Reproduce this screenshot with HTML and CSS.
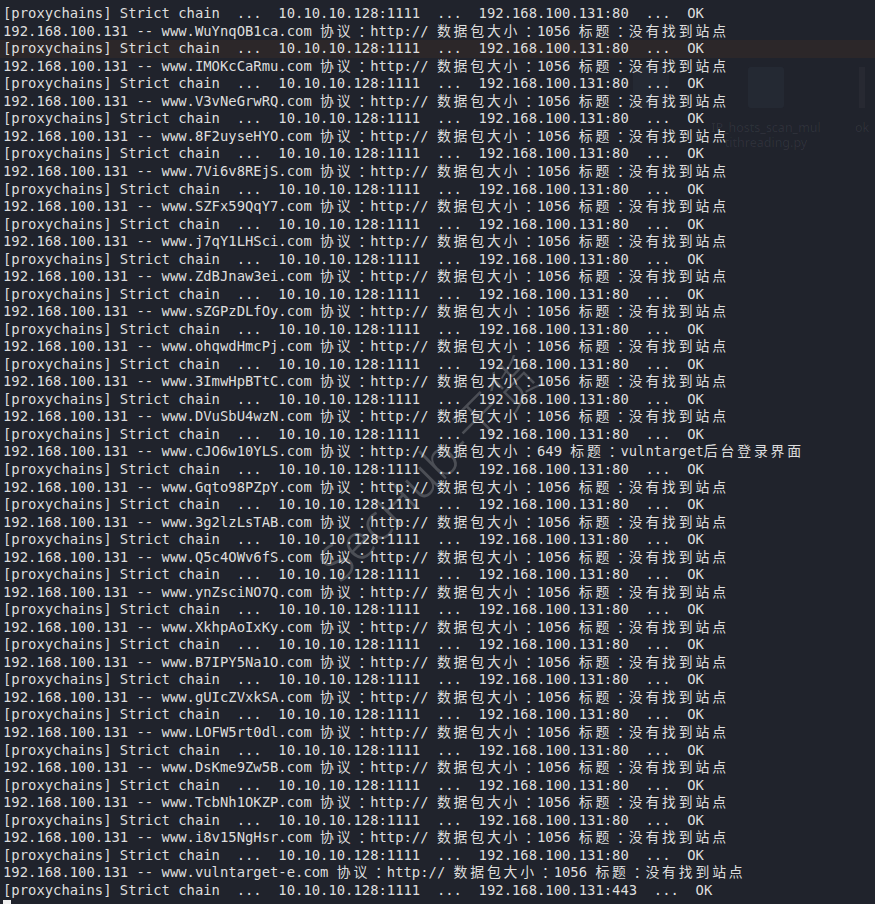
FILE: index.html
```html
<!DOCTYPE html>
<html lang="zh-CN">
<head>
  <meta charset="UTF-8" />
  <meta name="viewport" content="width=device-width, initial-scale=1.0"/>
  <title>proxychains scan</title>
  <link rel="stylesheet" href="styles.css">
</head>
<body>

  <div class="desktop">
    <div class="ghost ghost-left">
      <div class="ghost-icon"></div>
    </div>
    <div class="ghost ghost-mid">
      <div class="ghost-icon"></div>
      <span>IP_hosts_scan_mul<br>tithreading.py</span>
    </div>
    <div class="ghost ghost-right">
      <div class="ghost-bar"></div>
      <span>ok</span>
    </div>
  </div>

  <div class="terminal" id="terminal"></div>

  <div class="watermark">SecHub-干货</div>

  <script>
    const domains = [
      'WuYnqOB1ca', 'IMOKcCaRmu', 'V3vNeGrwRQ', '8F2uyseHYO', '7Vi6v8REjS',
      'SZFx59QqY7', 'j7qY1LHSci', 'ZdBJnaw3ei', 'sZGPzDLfOy', 'ohqwdHmcPj',
      '3ImwHpBTtC', 'DVuSbU4wzN', 'cJO6w10YLS', 'Gqto98PZpY', '3g2lzLsTAB',
      'Q5c4OWv6fS', 'ynZsciNO7Q', 'XkhpAoIxKy', 'B7IPY5Na1O', 'gUIcZVxkSA',
      'LOFW5rt0dl', 'DsKme9Zw5B', 'TcbNh1OKZP', 'i8v15NgHsr', 'vulntarget-e'
    ];

    // 特殊结果
    const found = {
      'cJO6w10YLS': { size: 649, title: 'vulntarget后台登录界面' }
    };

    function chainLine(port) {
      return `[proxychains] Strict chain  ...  10.10.10.128:1111  ...  192.168.100.131:${port}  ...  OK`;
    }

    function hostLine(name) {
      const info = found[name] || { size: 1056, title: '没有找到站点' };
      return `192.168.100.131 -- www.${name}.com 协议：http:// 数据包大小：${info.size} 标题：${info.title}`;
    }

    // 中文字符占两格
    function wide(text) {
      return text
        .replace(/[\u3000-\u9fff\uff00-\uffef]+/g, '<span class="cjk">$&</span>')
        .replace(/：/g, '<span class="colon">：</span>');
    }

    const lines = [];
    domains.forEach(name => {
      lines.push(chainLine(80));
      lines.push(hostLine(name));
    });
    lines.push(chainLine(443));

    const terminal = document.getElementById('terminal');
    lines.forEach((text, i) => {
      const div = document.createElement('div');
      div.className = i === 2 ? 'line line-active' : 'line';
      div.innerHTML = wide(text);
      terminal.appendChild(div);
    });

    const prompt = document.createElement('div');
    prompt.className = 'line';
    prompt.innerHTML = '<span class="cursor"></span>';
    terminal.appendChild(prompt);
  </script>

</body>
</html>
```

FILE: styles.css
```css
:root {
  --bg-color: #20232c;
  --text-color: #dedede;
  --active-row: #2c2729;
  --row: 17.54px;
}

* {
  margin: 0;
  padding: 0;
  box-sizing: border-box;
}

html, body {
  height: 100%;
  overflow: hidden;
}

body {
  background-color: var(--bg-color);
  color: var(--text-color);
  font-family: "DejaVu Sans Mono", "Noto Sans CJK SC", monospace;
  font-size: 13.87px;
  position: relative;
}

.terminal {
  position: relative;
  padding-top: 5.2px;
}

.line {
  height: var(--row);
  line-height: var(--row);
  padding-left: 3px;
  white-space: pre;
}

.line-active {
  background-color: var(--active-row);
}

.cjk {
  letter-spacing: calc(2ch - 1em);
}

/* titik dua lebar di tengah sel */
.colon {
  padding-left: 5px;
  letter-spacing: calc(2ch - 1em - 5px);
}

.cursor {
  display: inline-block;
  width: 8px;
  height: 15px;
  margin-top: 1px;
  vertical-align: top;
  background-color: #f0f0f0;
}

/* ikon desktop di belakang terminal */
.desktop {
  position: absolute;
  top: 0;
  left: 0;
  width: 100%;
  height: 200px;
  overflow: hidden;
  pointer-events: none;
}

.ghost {
  position: absolute;
  top: 67px;
  display: flex;
  flex-direction: column;
  align-items: center;
  gap: 12px;
  width: 120px;
  font-family: "Noto Sans", sans-serif;
  font-size: 12.5px;
  line-height: 15px;
  text-align: center;
  color: rgba(255, 255, 255, 0.07);
}

.ghost-icon {
  width: 36px;
  height: 41px;
  border-radius: 3px;
  background-color: rgba(120, 150, 200, 0.05);
}

.ghost-bar {
  width: 6px;
  height: 41px;
  background-color: rgba(255, 255, 255, 0.03);
}

.ghost-left {
  left: 591px;
}

.ghost-mid {
  left: 706px;
}

.ghost-right {
  left: 850px;
  width: 24px;
}

.watermark {
  position: absolute;
  top: 430px;
  left: 282px;
  transform: rotate(-45deg);
  transform-origin: center;
  font-family: "Noto Sans", "Noto Sans CJK SC", sans-serif;
  font-size: 50px;
  font-weight: 300;
  color: rgba(255, 255, 255, 0.2);
  white-space: nowrap;
  pointer-events: none;
}
```
